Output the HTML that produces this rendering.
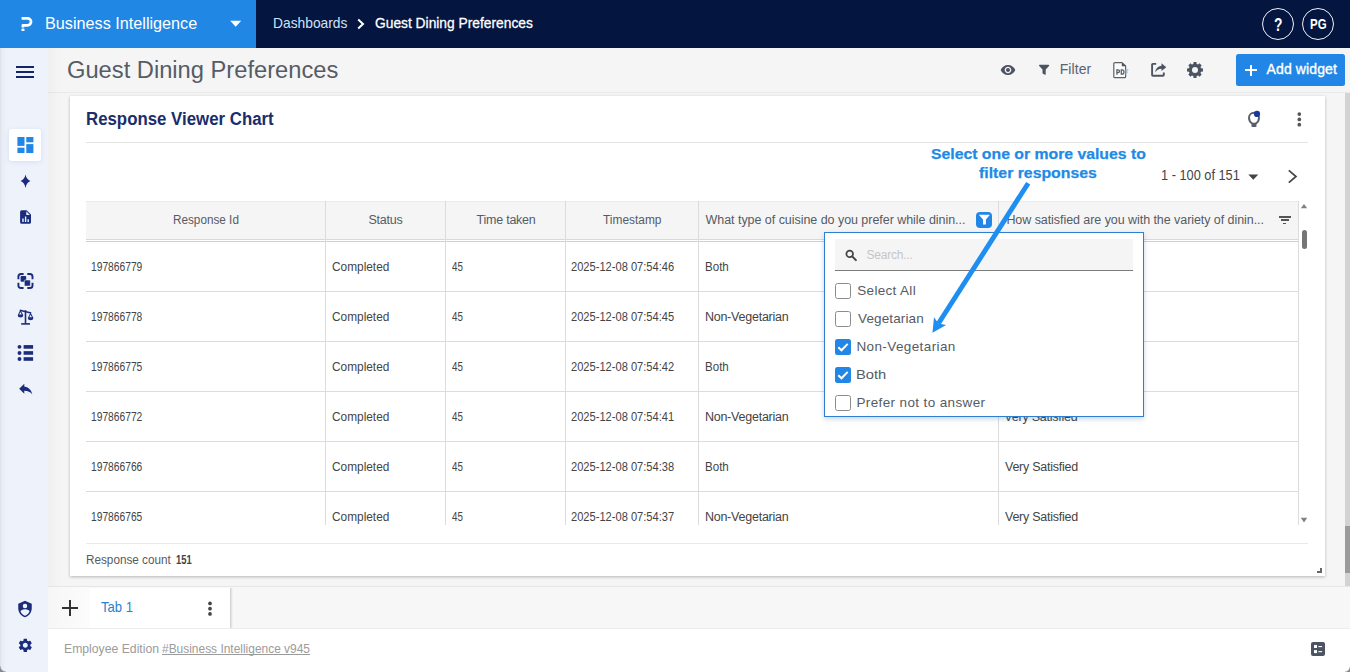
<!DOCTYPE html>
<html>
<head>
<meta charset="utf-8">
<title>Guest Dining Preferences</title>
<style>
*{box-sizing:border-box;margin:0;padding:0}
html,body{width:1350px;height:672px;overflow:hidden;background:#f5f5f5;font-family:"Liberation Sans",sans-serif;color:#444}
.abs{position:absolute}
.t{position:absolute;white-space:nowrap;line-height:1;transform-origin:0 50%}
#topbar{left:0;top:0;width:1350px;height:48px;background:#04153f}
#brand{left:0;top:0;width:256px;height:48px;background:#2187e5}
#sidebar{left:0;top:48px;width:48px;height:624px;background:#eef2fb}
#sideshadow{left:48px;top:48px;width:14px;height:624px;background:linear-gradient(to right,rgba(0,0,0,.025),rgba(0,0,0,0))}
#titlebar{left:48px;top:48px;width:1302px;height:45px;background:#f5f5f5;border-bottom:1px solid #e9e9e9}
#card{left:70px;top:96px;width:1255px;height:480px;background:#fff;box-shadow:0 1px 3px rgba(0,0,0,.26)}
#tabbar{left:48px;top:586px;width:1302px;height:43px;background:#f7f7f7;border-top:1px solid #e6e6e6}
#footer{left:48px;top:628px;width:1302px;height:44px;background:#fff;border-top:1px solid #ededed}
#pgscroll{left:1345px;top:93px;width:5px;height:493px;background:#d3d3d3}
#pgthumb{left:1345px;top:526px;width:5px;height:47px;background:#9b9b9b}
.row{position:absolute;left:86px;width:1212px;height:1px;background:#dcdcdc}
.vl{position:absolute;top:201px;width:1px;height:325px;background:#dcdcdc}
</style>
</head>
<body>
<div class="abs" id="topbar"></div>
<div class="abs" id="brand"></div>
<div class="abs" id="titlebar"></div>
<div class="abs" id="sidebar"></div>
<div class="abs" id="sideshadow"></div>
<div class="abs" id="card"></div>
<div class="abs" id="tabbar"></div>
<div class="abs" id="footer"></div>
<div class="abs" id="pgscroll"></div>
<div class="abs" id="pgthumb"></div>
<svg class="abs" style="left:18px;top:14px" width="18" height="20" viewBox="18 14 18 20"><path d="M21.6 18.4H27.6A3.45 3.45 0 0 1 27.6 25.3H22.9V27.6" fill="none" stroke="#fff" stroke-width="2.7" stroke-linejoin="round"/><rect x="21.5" y="28.4" width="3" height="2.6" rx=".6" fill="#fff"/></svg>
<div class="t" style="left:45.2px;top:15px;font-size:17px;color:#fff;transform:scaleX(0.9532);">Business Intelligence</div>
<svg class="abs" style="left:229px;top:20px" width="14" height="8" viewBox="0 0 14 8"><path d="M1.2 0.8H12.2L6.7 6.8Z" fill="#fff"/></svg>
<div class="t" style="left:272.56px;top:15px;font-size:15px;color:#cde2f8;transform:scaleX(0.9204);">Dashboards</div>
<svg class="abs" style="left:355px;top:18px" width="12" height="12" viewBox="0 0 12 12"><path d="M3.2 1.6L8 6.1L3.2 10.6" fill="none" stroke="#fff" stroke-width="2"/></svg>
<div class="t" style="left:375.44px;top:15px;font-size:15px;color:#fff;transform:scaleX(0.9192);-webkit-text-stroke:.3px #fff;">Guest Dining Preferences</div>
<div class="abs" style="left:1262px;top:8px;width:32px;height:32px;border:1.6px solid #eef2fa;border-radius:50%"></div>
<div class="abs" style="left:1302px;top:8px;width:32px;height:32px;border:1.6px solid #eef2fa;border-radius:50%"></div>
<div class="t" style="left:1273.78px;top:16px;font-size:18.5px;color:#fff;transform:scaleX(0.7469);font-weight:bold;">?</div>
<div class="t" style="left:1309.88px;top:17px;font-size:14px;color:#fff;transform:scaleX(0.8187);font-weight:bold;">PG</div>
<div class="abs" style="left:16px;top:66px;width:18px;height:2px;background:#14246b;box-shadow:0 5px 0 #14246b,0 10px 0 #14246b"></div>
<div class="t" style="left:66.9px;top:59px;font-size:23px;color:#555c66;transform:scaleX(1.0302);">Guest Dining Preferences</div>
<svg class="abs" style="left:1000px;top:62px" width="16" height="16" viewBox="0 0 24 24"><path fill="#4c5462" d="M12 4.5C7 4.5 2.73 7.61 1 12c1.73 4.39 6 7.5 11 7.5s9.27-3.11 11-7.5c-1.73-4.39-6-7.5-11-7.5zM12 17c-2.76 0-5-2.24-5-5s2.24-5 5-5 5 2.24 5 5-2.24 5-5 5zm0-8c-1.66 0-3 1.34-3 3s1.34 3 3 3 3-1.34 3-3-1.34-3-3-3z"/></svg>
<svg class="abs" style="left:1038px;top:64px" width="12" height="12" viewBox="0 0 12 12"><path fill="#4c5462" d="M1.4.8H10.8Q11.5 1.2 11 1.9L7.7 5.6V10.4Q7.6 10.9 7 10.7L4.9 9.7Q4.5 9.5 4.5 9.1V5.6L1.2 1.9Q.7 1.2 1.4.8Z"/></svg>
<div class="t" style="left:1059.64px;top:62px;font-size:14px;color:#5a6270;letter-spacing:0.094px;">Filter</div>
<svg class="abs" style="left:1112px;top:61px" width="18" height="18" viewBox="0 0 18 18"><path fill="#fafbfd" stroke="#5a5f68" stroke-width="1.2" stroke-linejoin="round" d="M3 1.6H10L13.6 5V15.7Q13.6 16.7 12.6 16.7H3Q1.8 16.7 1.8 15.7V2.6Q1.8 1.6 3 1.6Z"/><path fill="#4c525c" d="M9.8 1.6L13.7 5.3H9.8Z"/><path fill="none" stroke="#a3b9d8" stroke-width="1.2" d="M14.1 13.7V8.8H16.3M14.1 11.1H15.9"/><g fill="none" stroke="#555a62" stroke-width="1.25"><path d="M4.9 13.8V8.9H6Q7.5 8.9 7.5 10.3Q7.5 11.7 6 11.7H4.9"/><path d="M9.3 8.9V13.2H10.1Q12 13.2 12 11Q12 8.9 10.1 8.9Z"/></g></svg>
<svg class="abs" style="left:1150px;top:62px" width="17" height="16" viewBox="0 0 17 16"><path fill="none" stroke="#4c5462" stroke-width="1.9" stroke-linejoin="round" d="M6.2 1.9H2.9Q2.1 1.9 2.1 2.7V13Q2.1 13.8 2.9 13.8H13Q13.8 13.8 13.8 13V10.4"/><path fill="#4c5462" d="M11.5 1.3L16.3 5.2L11.5 9.1V6.8Q7.5 6.7 5.2 10.5Q5.5 4.7 11.5 3.7Z"/></svg>
<svg class="abs" style="left:1186px;top:61px" width="18" height="18" viewBox="0 0 18 18"><path fill="#4c5462" fill-rule="evenodd" d="M7.34 2.92L7.54 1.03L10.46 1.03L10.66 2.92L12.12 3.53L13.61 2.34L15.66 4.39L14.47 5.88L15.08 7.34L16.97 7.54L16.97 10.46L15.08 10.66L14.47 12.12L15.66 13.61L13.61 15.66L12.12 14.47L10.66 15.08L10.46 16.97L7.54 16.97L7.34 15.08L5.88 14.47L4.39 15.66L2.34 13.61L3.53 12.12L2.92 10.66L1.03 10.46L1.03 7.54L2.92 7.34L3.53 5.88L2.34 4.39L4.39 2.34L5.88 3.53ZM6 9a3 3 0 1 0 6 0a3 3 0 1 0 -6 0Z"/></svg>
<div class="abs" style="left:1236px;top:54px;width:109px;height:32px;background:#2186e5;border-radius:2.5px"></div>
<div class="abs" style="left:1245px;top:69.2px;width:12px;height:2.1px;background:#fff"></div><div class="abs" style="left:1249.95px;top:64.6px;width:2.1px;height:11.3px;background:#fff"></div>
<div class="t" style="left:1266.56px;top:62px;font-size:14px;color:#fff;letter-spacing:0.117px;-webkit-text-stroke:.35px #fff;">Add widget</div>
<div class="abs" style="left:9px;top:129px;width:32px;height:32px;background:#fff;border-radius:3px;box-shadow:0 1px 5px rgba(60,80,160,.12)"></div>
<svg class="abs" style="left:17px;top:137px" width="17" height="16" viewBox="0 0 17 16"><g fill="#2186e5"><rect x=".4" y="0" width="7.1" height="8.9"/><rect x=".4" y="10.7" width="7.1" height="5.3"/><rect x="9.3" y="0" width="7.1" height="5.3"/><rect x="9.3" y="7.1" width="7.1" height="8.9"/></g></svg>
<svg class="abs" style="left:19px;top:173px" width="13" height="16" viewBox="0 0 13 16"><path fill="#1c2c7c" d="M6.5 1.4Q7.4 6.3 11.5 8Q7.4 9.7 6.5 14.9Q5.6 9.7 1.5 8Q5.6 6.3 6.5 1.4Z"/></svg>
<svg class="abs" style="left:19px;top:209px" width="13" height="16" viewBox="0 0 13 16"><path fill="#1c2c7c" fill-rule="evenodd" d="M2.6 1.2H7.6L12 5.6V13.2Q12 14.7 10.5 14.7H2.6Q1.1 14.7 1.1 13.2V2.7Q1.1 1.2 2.6 1.2ZM7.3 2.3V5.9H10.9ZM3.3 9.5H4.7V12.9H3.3ZM5.9 7.6H7.3V12.9H5.9ZM8.5 10.3H9.9V12.9H8.5Z"/></svg>
<svg class="abs" style="left:17px;top:272px" width="17" height="18" viewBox="0 0 17 18"><g fill="none" stroke="#1c2c7c" stroke-width="1.9" stroke-linecap="butt"><path d="M6.6 2H4Q1.4 2 1.4 4.6V7.3"/><path d="M10.3 2H12.9Q15.5 2 15.5 4.6V7.3"/><path d="M6.6 16H4Q1.4 16 1.4 13.4V10.7"/><path d="M10.3 16H12.9Q15.5 16 15.5 13.4V10.7"/></g><rect x="3.6" y="4.1" width="5.6" height="5.6" rx=".8" fill="#1c2c7c"/><rect x="7.3" y="8" width="6.1" height="6.1" rx=".8" fill="#1c2c7c" stroke="#eef2fb" stroke-width=".6"/></svg>
<svg class="abs" style="left:17px;top:308px" width="18" height="18" viewBox="17 308 18 18"><g fill="none" stroke="#1c2c7c" stroke-width="1.6"><path d="M25.5 310.2V323.8"/><path d="M21.2 323.9H30"/><path d="M19.8 310.3L31.2 313"/></g><path fill="#1c2c7c" fill-rule="evenodd" d="M20.4 309.8L23.3 315.2Q23.2 317.5 20.5 317.6Q17.8 317.5 17.7 315.2ZM20.45 312L19.1 314.6H21.8Z"/><path fill="#1c2c7c" fill-rule="evenodd" d="M30.6 312.5L33.4 317.9Q33.3 320.2 30.6 320.3Q27.9 320.2 27.8 317.9ZM30.6 314.7L29.25 317.3H31.95Z"/></svg>
<svg class="abs" style="left:17px;top:344px" width="17" height="18" viewBox="17 344 17 18"><g fill="#1c2c7c"><circle cx="19.5" cy="346.85" r="1.95"/><circle cx="19.5" cy="352.95" r="1.95"/><circle cx="19.5" cy="359" r="1.95"/><rect x="23.6" y="345.1" width="9.5" height="3.6"/><rect x="23.6" y="351.15" width="9.5" height="3.6"/><rect x="23.6" y="357.2" width="9.5" height="3.6"/></g></svg>
<svg class="abs" style="left:16.8px;top:380.35px" width="17.5" height="17.5" viewBox="0 0 24 24"><path fill="#1c2c7c" d="M10 9V5l-7 7 7 7v-4.1c5 0 8.5 1.6 11 5.1-1-5-4-10-11-11z"/></svg>
<svg class="abs" style="left:16.1px;top:600.2px" width="18" height="18" viewBox="0 0 24 24"><path fill="#1c2c7c" d="M12,1L3,5V11C3,16.55 6.84,21.74 12,23C17.16,21.74 21,16.55 21,11V5L12,1M12,5A3,3 0 0,1 15,8A3,3 0 0,1 12,11A3,3 0 0,1 9,8A3,3 0 0,1 12,5M17.13,17C15.92,18.85 14.11,20.24 12,20.92C9.89,20.24 8.08,18.85 6.87,17C6.53,16.5 6.24,16 6,15.47C6,13.82 8.71,12.47 12,12.47C15.29,12.47 18,13.79 18,15.47C17.76,16 17.47,16.5 17.13,17Z"/></svg>
<svg class="abs" style="left:17.2px;top:636.5px" width="16.6" height="16.6" viewBox="0 0 24 24"><path fill="#1c2c7c" d="M19.14 12.94c.040-.3.06-.610.06-.940 0-.320-.020-.640-.070-.940l2.03-1.58c.180-.140.23-.410.12-.610l-1.92-3.32c-.120-.220-.370-.290-.590-.220l-2.39.96c-.5-.380-1.03-.7-1.62-.940l-.360-2.54c-.040-.240-.240-.410-.480-.410h-3.84c-.240 0-.430.17-.470.41l-.360 2.54c-.590.24-1.13.570-1.62.940l-2.39-.96c-.220-.080-.470 0-.590.22L2.74 8.87c-.120.21-.080.47.12.61l2.03 1.58c-.050.3-.090.63-.090.94s.020.64.070.94l-2.03 1.58c-.180.14-.230.41-.120.61l1.92 3.32c.120.22.370.29.590.22l2.39-.96c.5.38 1.03.7 1.62.940l.360 2.54c.050.24.240.41.480.41h3.84c.240 0 .440-.170.47-.410l.360-2.54c.590-.240 1.13-.560 1.62-.940l2.39.96c.220.08.470 0 .590-.220l1.92-3.32c.120-.220.07-.470-.120-.610l-2.01-1.58zM12 15.6c-1.98 0-3.6-1.62-3.6-3.6s1.62-3.6 3.6-3.6 3.6 1.62 3.6 3.6-1.62 3.6-3.6 3.6z"/></svg>
<div class="t" style="left:85.64px;top:110px;font-size:18px;color:#1b2d6b;transform:scaleX(0.9349);font-weight:bold;">Response Viewer Chart</div>
<div class="abs" style="left:86px;top:142px;width:1222px;height:1px;background:#e4e4e4"></div>
<svg class="abs" style="left:1246px;top:109px" width="17" height="20" viewBox="1246 109 17 20"><path fill="none" stroke="#585d68" stroke-width="1.9" d="M1252.1 123.6Q1249 121.3 1249 117.8A5 5 0 0 1 1259 117.8Q1259 121.3 1255.9 123.6"/><rect x="1251.5" y="122.8" width="5" height="4.2" rx=".9" fill="#585d68"/><circle cx="1257" cy="113.9" r="3.1" fill="#1c37a0"/></svg>
<svg class="abs" style="left:1296px;top:111px" width="7" height="17" viewBox="1296 111 7 17"><g fill="#555"><circle cx="1299.3" cy="114.1" r="1.85"/><circle cx="1299.3" cy="119.4" r="1.85"/><circle cx="1299.3" cy="124.7" r="1.85"/></g></svg>
<div class="t" style="left:931.44px;top:146px;font-size:15px;color:#1e8ae6;transform:scaleX(1.0518);font-weight:bold;-webkit-text-stroke:.25px #1e8ae6;">Select one or more values to</div>
<div class="t" style="left:978.88px;top:165px;font-size:15px;color:#1e8ae6;transform:scaleX(1.0547);font-weight:bold;-webkit-text-stroke:.25px #1e8ae6;">filter responses</div>
<div class="t" style="left:1161.22px;top:168px;font-size:14px;color:#444;transform:scaleX(0.9118);">1 - 100 of 151</div>
<svg class="abs" style="left:1247px;top:173px" width="13" height="8" viewBox="0 0 13 8"><path d="M1.3 1.5H11.3L6.3 6.7Z" fill="#444"/></svg>
<svg class="abs" style="left:1285px;top:168px" width="14" height="17" viewBox="0 0 14 17"><path d="M3.8 2.3L11 8.5L3.8 14.7" fill="none" stroke="#444" stroke-width="1.7"/></svg>
<div class="abs" style="left:86px;top:201px;width:1212px;height:38px;background:#f5f5f5;border-top:1px solid #ececec"></div>
<div class="abs" style="left:86px;top:239px;width:1212px;height:1px;background:#d9d9d9"></div>
<div class="abs" style="left:86px;top:241px;width:1212px;height:1px;background:#cfcfcf"></div>
<div class="row" style="top:291px"></div>
<div class="row" style="top:341px"></div>
<div class="row" style="top:391px"></div>
<div class="row" style="top:441px"></div>
<div class="row" style="top:491px"></div>
<div class="vl" style="left:325px"></div>
<div class="vl" style="left:445px"></div>
<div class="vl" style="left:565px"></div>
<div class="vl" style="left:698px"></div>
<div class="vl" style="left:998px"></div>
<div class="vl" style="left:1298px"></div>
<div class="t" style="left:172.66px;top:214px;font-size:12.5px;color:#555b63;transform:scaleX(0.939);">Response Id</div>
<div class="t" style="left:368.44px;top:214px;font-size:12.5px;color:#555b63;letter-spacing:-0.243px;">Status</div>
<div class="t" style="left:476.56px;top:214px;font-size:12.5px;color:#555b63;letter-spacing:-0.236px;">Time taken</div>
<div class="t" style="left:603px;top:214px;font-size:12.5px;color:#555b63;transform:scaleX(0.9525);">Timestamp</div>
<div class="t" style="left:705.56px;top:214px;font-size:12.5px;color:#555b63;letter-spacing:-0.043px;">What type of cuisine do you prefer while dinin...</div>
<div class="t" style="left:1006.4px;top:214px;font-size:12.5px;color:#555b63;letter-spacing:-0.06px;">How satisfied are you with the variety of dinin...</div>
<div class="t" style="left:91.22px;top:261px;font-size:12.5px;color:#444;transform:scaleX(0.8202);">197866779</div>
<div class="t" style="left:331.66px;top:261px;font-size:12.5px;color:#444;transform:scaleX(0.9486);">Completed</div>
<div class="t" style="left:451.66px;top:261px;font-size:12.5px;color:#444;transform:scaleX(0.7825);">45</div>
<div class="t" style="left:571.22px;top:261px;font-size:12.5px;color:#444;transform:scaleX(0.8884);">2025-12-08 07:54:46</div>
<div class="t" style="left:704.88px;top:261px;font-size:12.5px;color:#444;transform:scaleX(0.9248);">Both</div>
<div class="t" style="left:91.22px;top:311px;font-size:12.5px;color:#444;transform:scaleX(0.8202);">197866778</div>
<div class="t" style="left:331.66px;top:311px;font-size:12.5px;color:#444;transform:scaleX(0.9486);">Completed</div>
<div class="t" style="left:451.66px;top:311px;font-size:12.5px;color:#444;transform:scaleX(0.7825);">45</div>
<div class="t" style="left:571.22px;top:311px;font-size:12.5px;color:#444;transform:scaleX(0.8884);">2025-12-08 07:54:45</div>
<div class="t" style="left:704.88px;top:311px;font-size:12.5px;color:#444;letter-spacing:-0.228px;">Non-Vegetarian</div>
<div class="t" style="left:91.22px;top:361px;font-size:12.5px;color:#444;transform:scaleX(0.8202);">197866775</div>
<div class="t" style="left:331.66px;top:361px;font-size:12.5px;color:#444;transform:scaleX(0.9486);">Completed</div>
<div class="t" style="left:451.66px;top:361px;font-size:12.5px;color:#444;transform:scaleX(0.7825);">45</div>
<div class="t" style="left:571.22px;top:361px;font-size:12.5px;color:#444;transform:scaleX(0.8884);">2025-12-08 07:54:42</div>
<div class="t" style="left:704.88px;top:361px;font-size:12.5px;color:#444;transform:scaleX(0.9248);">Both</div>
<div class="t" style="left:91.22px;top:411px;font-size:12.5px;color:#444;transform:scaleX(0.8202);">197866772</div>
<div class="t" style="left:331.66px;top:411px;font-size:12.5px;color:#444;transform:scaleX(0.9486);">Completed</div>
<div class="t" style="left:451.66px;top:411px;font-size:12.5px;color:#444;transform:scaleX(0.7825);">45</div>
<div class="t" style="left:571.22px;top:411px;font-size:12.5px;color:#444;transform:scaleX(0.8884);">2025-12-08 07:54:41</div>
<div class="t" style="left:704.88px;top:411px;font-size:12.5px;color:#444;letter-spacing:-0.228px;">Non-Vegetarian</div>
<div class="t" style="left:1004.3px;top:411px;font-size:12.5px;color:#444;letter-spacing:-0.225px;">Very Satisfied</div>
<div class="t" style="left:91.22px;top:461px;font-size:12.5px;color:#444;transform:scaleX(0.8202);">197866766</div>
<div class="t" style="left:331.66px;top:461px;font-size:12.5px;color:#444;transform:scaleX(0.9486);">Completed</div>
<div class="t" style="left:451.66px;top:461px;font-size:12.5px;color:#444;transform:scaleX(0.7825);">45</div>
<div class="t" style="left:571.22px;top:461px;font-size:12.5px;color:#444;transform:scaleX(0.8884);">2025-12-08 07:54:38</div>
<div class="t" style="left:704.88px;top:461px;font-size:12.5px;color:#444;transform:scaleX(0.9248);">Both</div>
<div class="t" style="left:1005.02px;top:461px;font-size:12.5px;color:#444;letter-spacing:-0.256px;">Very Satisfied</div>
<div class="t" style="left:91.22px;top:511px;font-size:12.5px;color:#444;transform:scaleX(0.8202);">197866765</div>
<div class="t" style="left:331.66px;top:511px;font-size:12.5px;color:#444;transform:scaleX(0.9486);">Completed</div>
<div class="t" style="left:451.66px;top:511px;font-size:12.5px;color:#444;transform:scaleX(0.7825);">45</div>
<div class="t" style="left:571.22px;top:511px;font-size:12.5px;color:#444;transform:scaleX(0.8884);">2025-12-08 07:54:37</div>
<div class="t" style="left:704.88px;top:511px;font-size:12.5px;color:#444;letter-spacing:-0.228px;">Non-Vegetarian</div>
<div class="t" style="left:1005.02px;top:511px;font-size:12.5px;color:#444;letter-spacing:-0.256px;">Very Satisfied</div>
<div class="abs" style="left:80px;top:525px;width:1232px;height:18px;background:#fff"></div>
<div class="abs" style="left:86px;top:543px;width:1222px;height:1px;background:#e9e9e9"></div>
<div class="t" style="left:86.44px;top:554px;font-size:12.5px;color:#555b63;transform:scaleX(0.9382);">Response count</div>
<div class="t" style="left:176.34px;top:554px;font-size:12.5px;color:#444;transform:scaleX(0.7509);font-weight:bold;">151</div>
<div class="abs" style="left:976px;top:212px;width:16px;height:16px;background:#2186e5;border-radius:4px"></div>
<svg class="abs" style="left:976px;top:212px" width="16" height="16" viewBox="0 0 16 16"><path fill="#fff" d="M2.8 2.7H13.9L9.9 7.6V12.6H7V7.6Z"/></svg>
<div class="abs" style="left:1278.5px;top:216px;width:12px;height:1.5px;background:#555"></div><div class="abs" style="left:1280.5px;top:219.3px;width:8px;height:1.5px;background:#555"></div><div class="abs" style="left:1282.7px;top:222.6px;width:3.6px;height:1.5px;background:#555"></div>
<svg class="abs" style="left:1300px;top:203px" width="8" height="6" viewBox="0 0 8 6"><path d="M.8 5.2L4 1L7.2 5.2Z" fill="#808080"/></svg>
<div class="abs" style="left:1301.5px;top:230px;width:5.5px;height:19px;border-radius:3px;background:#757575"></div>
<svg class="abs" style="left:1300px;top:517px" width="8" height="6" viewBox="0 0 8 6"><path d="M.8 .8L4 5.4L7.2 .8Z" fill="#808080"/></svg>
<div class="abs" style="left:1316.5px;top:567.5px;width:5.5px;height:5.5px;border-right:2px solid #666;border-bottom:2px solid #666"></div>
<div class="abs" style="left:824px;top:232px;width:320px;height:185px;background:#fff;border:1px solid #2f7fd1;box-shadow:0 2px 5px rgba(40,90,160,.25)"></div>
<div class="abs" style="left:835px;top:239px;width:298px;height:31px;background:#f5f5f5"></div>
<div class="abs" style="left:835px;top:270px;width:298px;height:1px;background:#7d7d7d"></div>
<svg class="abs" style="left:844px;top:248px" width="14" height="14" viewBox="0 0 14 14"><circle cx="5.7" cy="5.9" r="3.3" fill="none" stroke="#444" stroke-width="1.7"/><path d="M8.2 8.4L11.9 12.1" stroke="#444" stroke-width="2" stroke-linecap="round"/></svg>
<div class="t" style="left:866.42px;top:249px;font-size:12px;color:#c6c6c6;letter-spacing:-0.205px;">Search...</div>
<div class="abs" style="left:835px;top:283px;width:16px;height:16px;border-radius:2.5px;background:#fff;border:1px solid #8c8c8c"></div>
<div class="t" style="left:857.22px;top:284px;font-size:13.5px;color:#555b63;letter-spacing:0.326px;">Select All</div>
<div class="abs" style="left:835px;top:311px;width:16px;height:16px;border-radius:2.5px;background:#fff;border:1px solid #8c8c8c"></div>
<div class="t" style="left:858.02px;top:312px;font-size:13.5px;color:#555b63;letter-spacing:0.134px;">Vegetarian</div>
<div class="abs" style="left:835px;top:339px;width:16px;height:16px;border-radius:2.5px;background:#2186e5"></div>
<svg class="abs" style="left:835px;top:339px" width="16" height="16" viewBox="0 0 16 16"><path d="M3.3 8.3L6.5 11.3L12.7 4.9" fill="none" stroke="#fff" stroke-width="2"/></svg>
<div class="t" style="left:856.42px;top:340px;font-size:13.5px;color:#555b63;letter-spacing:0.393px;">Non-Vegetarian</div>
<div class="abs" style="left:835px;top:367px;width:16px;height:16px;border-radius:2.5px;background:#2186e5"></div>
<svg class="abs" style="left:835px;top:367px" width="16" height="16" viewBox="0 0 16 16"><path d="M3.3 8.3L6.5 11.3L12.7 4.9" fill="none" stroke="#fff" stroke-width="2"/></svg>
<div class="t" style="left:856.42px;top:368px;font-size:13.5px;color:#555b63;transform:scaleX(1.0896);">Both</div>
<div class="abs" style="left:835px;top:395px;width:16px;height:16px;border-radius:2.5px;background:#fff;border:1px solid #8c8c8c"></div>
<div class="t" style="left:856.42px;top:396px;font-size:13.5px;color:#555b63;letter-spacing:0.375px;">Prefer not to answer</div>
<svg class="abs" style="left:900px;top:170px" width="160" height="180" viewBox="900 170 160 180"><path d="M1028.2 183.2L938.43 323.53" stroke="#1e8ef0" stroke-width="4.9" fill="none"/><path d="M932.5 332.8L946.11 324.89L938.43 323.53L933.98 317.13Z" fill="#1e8ef0"/></svg>
<div class="abs" style="left:48px;top:587px;width:42px;height:41px;background:linear-gradient(to right,#f6f6f6,#fcfcfc)"></div>
<div class="abs" style="left:90px;top:588px;width:140px;height:40px;background:#fff"></div><div class="abs" style="left:230px;top:588px;width:3px;height:40px;background:linear-gradient(to right,rgba(0,0,0,.16),rgba(0,0,0,0))"></div>
<div class="abs" style="left:62px;top:607px;width:16.4px;height:2px;background:#333"></div><div class="abs" style="left:69.2px;top:599.8px;width:2px;height:16.4px;background:#333"></div>
<div class="t" style="left:100.56px;top:600px;font-size:14.5px;color:#2a7fd0;transform:scaleX(0.9055);">Tab 1</div>
<svg class="abs" style="left:206px;top:600px" width="8" height="17" viewBox="206 600 8 17"><g fill="#444"><circle cx="210" cy="603.4" r="1.85"/><circle cx="210" cy="608.65" r="1.85"/><circle cx="210" cy="613.9" r="1.85"/></g></svg>
<div class="t" style="left:63.76px;top:642px;font-size:13px;color:#9b9b9b;transform:scaleX(0.9394);">Employee Edition</div>
<div class="t" style="left:162px;top:642px;font-size:13px;color:#9b9b9b;transform:scaleX(0.9183);">#Business Intelligence v945</div>
<div class="abs" style="left:162px;top:654px;width:148px;height:1px;background:#9b9b9b"></div>
<svg class="abs" style="left:1311px;top:642px" width="14" height="14" viewBox="0 0 14 14"><rect width="14" height="14" rx="2" fill="#4c5462"/><g fill="#fff"><rect x="3" y="3" width="3" height="3"/><rect x="3" y="8.1" width="3" height="3"/><rect x="7.4" y="4" width="3.7" height="1.1"/><rect x="7.4" y="9.1" width="3.7" height="1.1"/></g></svg>
<div class="abs" style="left:0;top:48px;width:1px;height:624px;background:rgba(0,0,0,.06)"></div>
<div class="abs" style="left:1px;top:48px;width:6px;height:624px;background:linear-gradient(to right,rgba(0,0,0,.03),rgba(0,0,0,0))"></div>
<div class="abs" style="left:0;top:666px;width:6px;height:6px;background:radial-gradient(circle at 100% 0,rgba(130,130,130,0) 5px,#8a8a8a 6.2px)"></div>
<div class="abs" style="left:1345px;top:667px;width:5px;height:5px;background:radial-gradient(circle at 0 0,rgba(130,130,130,0) 4px,#8a8a8a 5.2px)"></div>

</body>
</html>
